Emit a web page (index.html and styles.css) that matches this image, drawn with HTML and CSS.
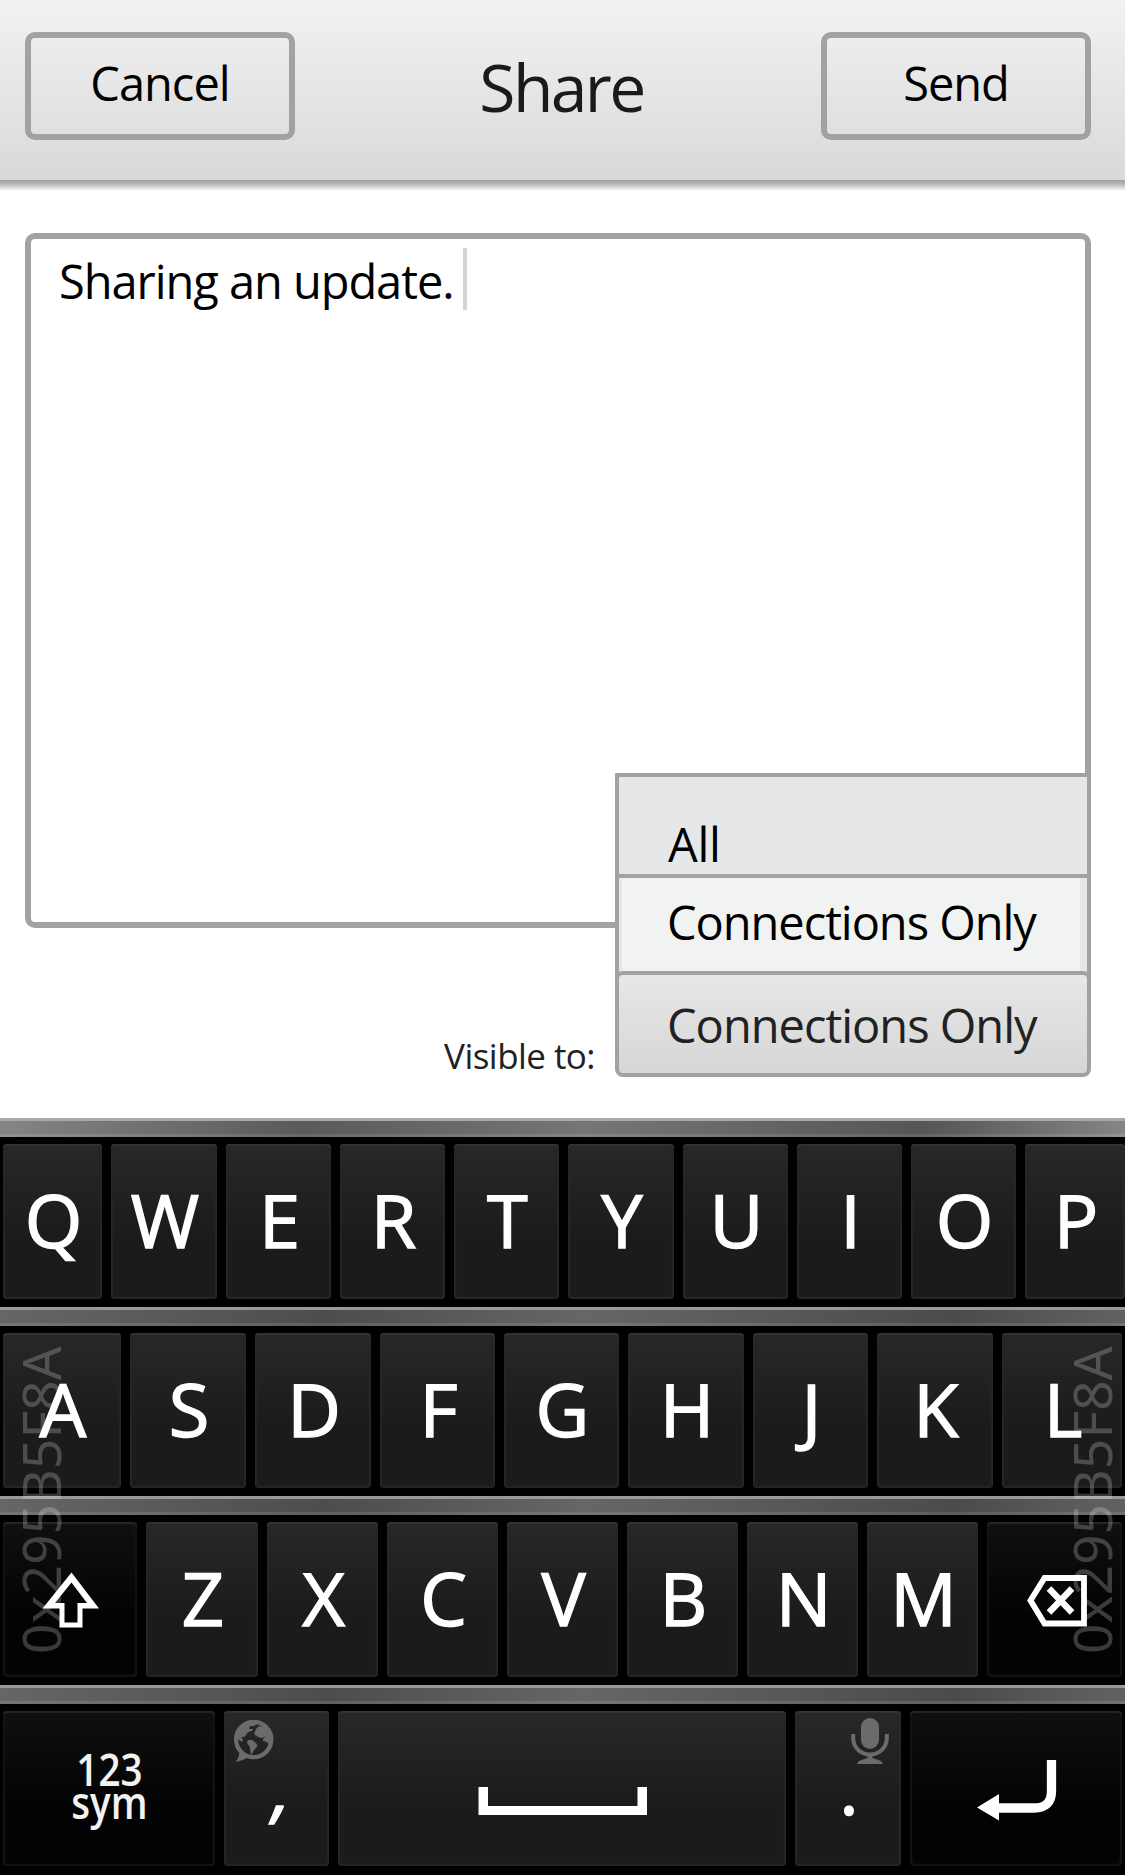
FILE: index.html
```html
<!DOCTYPE html>
<html lang="en">
<head>
<meta charset="utf-8">
<title>Share</title>
<link rel="stylesheet" href="styles.css">
</head>
<body>
<header class="topbar">
  <button class="action cancel">Cancel</button>
  <h1 class="title">Share</h1>
  <button class="action send">Send</button>
</header>

<main class="compose">
  <div class="editor"><span class="draft">Sharing an update.</span><span class="caret"></span></div>
  <div class="visibility">
    <span class="visibility-label">Visible to:</span>
    <div class="dropdown">
      <ul class="menu">
        <li class="option">All</li>
        <li class="option selected">Connections Only</li>
      </ul>
      <div class="current">Connections Only</div>
    </div>
  </div>
</main>

<section class="keyboard">
  <div class="fret first"></div>
  <div class="keys row-q">
    <span class="key">Q</span><span class="key">W</span><span class="key">E</span><span class="key">R</span><span class="key">T</span><span class="key">Y</span><span class="key">U</span><span class="key">I</span><span class="key">O</span><span class="key">P</span>
  </div>
  <div class="fret"></div>
  <div class="keys row-a">
    <span class="key">A</span><span class="key">S</span><span class="key">D</span><span class="key">F</span><span class="key">G</span><span class="key">H</span><span class="key">J</span><span class="key">K</span><span class="key">L</span>
  </div>
  <div class="fret"></div>
  <div class="keys row-z">
    <span class="key dark icon-key shift">
      <svg width="58" height="56" viewBox="0 0 58 56"><path fill="#fff" fill-rule="evenodd" d="M29.5 0.5 57 36.500H40.500V55.500H17.500V36.500H0.500ZM29.500 10.500 13 31H22.500V50.500H35.500V31H45Z"/></svg>
    </span>
    <span class="key">Z</span><span class="key">X</span><span class="key">C</span><span class="key">V</span><span class="key">B</span><span class="key">N</span><span class="key">M</span>
    <span class="key dark icon-key backspace">
      <svg width="60" height="52" viewBox="0 0 60 52"><path fill="none" stroke="#fff" stroke-width="5.800" d="M17.500 3H57V48.500H17.500L3.500 25.500Z"/><path fill="none" stroke="#fff" stroke-width="6.500" d="M22 13.500 45 37.500M45 13.500 22 37.500"/></svg>
    </span>
  </div>
  <div class="fret"></div>
  <div class="keys row-space">
    <span class="key dark sym"><span>123</span><span>sym</span></span>
    <span class="key"><svg class="badge globe" width="42" height="43" viewBox="0 0 42 43"><circle cx="20.700" cy="19.500" r="17.600" fill="none" stroke="#6b6b6b" stroke-width="4.400"/><g fill="#6b6b6b"><path d="M6 30C7 36 5 39 2.500 41.500 8 41.500 12 39 17 36Z"/><path d="M2 20 4 10 10 4 18 2 24 4 21 6 17 6 16 9 20 9 19 11 15 12 13 15 11 17 8 17 10 20 9 22 5 19Z"/><path d="M15 20 19 20 23 23 24.500 26 22 29 20 32 18.500 35 17 30 17 27 14 23Z"/><path d="M23 9 26 6 31 7 38 14 40 21 37 26 34 22 30 21 30 19 33 16 29 18 25 17 21 14Z"/></g></svg><i class="comma">,</i></span>
    <span class="key icon-key space">
      <svg width="170" height="28" viewBox="0 0 170 28"><path fill="#fff" d="M0.500 0H10V19H159.500V0H169V28H0.500Z"/></svg>
    </span>
    <span class="key"><svg class="badge mic" width="38" height="48" viewBox="0 0 38 48"><rect x="10" y="1" width="18" height="31" rx="9" fill="#6b6b6b"/><path fill="none" stroke="#6b6b6b" stroke-width="4" d="M2.200 17V21C2.200 30 9 37.500 19 37.500S35.800 30 35.800 21V17"/><path fill="#6b6b6b" d="M16.500 37H21.500V41C25 42.500 31 43 32 47H6C7 43 13 42.500 16.500 41Z"/></svg>.</span>
    <span class="key dark icon-key enter">
      <svg width="80" height="62" viewBox="0 0 80 62"><path fill="none" stroke="#fff" stroke-width="9.300" d="M20 48H57Q74.500 48 74.500 31V0"/><path fill="#fff" d="M0 47.500 22 34V60.500Z"/></svg>
    </span>
  </div>
  <span class="watermark left">0x295B5F8A</span>
  <span class="watermark right">0x295B5F8A</span>
</section>
</body>
</html>
```
FILE: styles.css
```css
* { box-sizing: border-box; }

body {
  margin: 0;
  width: 1125px;
  height: 1875px;
  display: flex;
  flex-direction: column;
  overflow: hidden;
  background: #fff;
  color: #000;
  font: 47px "Open Sans", "Noto Sans", sans-serif;
}

/* Header */
.topbar {
  flex: none;
  height: 191px;
  padding: 32px 34px 0 25px;
  display: flex;
  align-items: flex-start;
  justify-content: space-between;
  background:
    linear-gradient(#a0a0a0, #b4b4b4 35%, #fff) 0 180px / 100% 11px no-repeat,
    linear-gradient(#f2f2f2, #d9d9d9) 0 0 / 100% 180px no-repeat;
}

.action {
  width: 270px;
  height: 108px;
  padding: 0 0 5px;
  border: 6px solid #a2a2a2;
  border-radius: 10px;
  background: none;
  color: #000;
  font: inherit;
  line-height: 91px;
  text-align: center;
  white-space: nowrap;
}

.cancel { letter-spacing: -1px; }
.send { letter-spacing: -1.1px; }

.title {
  margin: 0;
  height: 109px;
  font-size: 66px;
  font-weight: 400;
  line-height: 109px;
  letter-spacing: -2.6px;
  color: #1a1a1a;
  padding-left: 7px;
}

/* Compose area */
.compose {
  flex: none;
  height: 927px;
  padding: 42px 34px 0 25px;
}

.editor {
  height: 695px;
  padding: 9px 28px;
  display: flex;
  align-items: flex-start;
  border: 6px solid #a2a2a2;
  border-radius: 10px;
}

.draft {
  line-height: 66px;
  letter-spacing: -1.05px;
  white-space: nowrap;
}

.caret {
  width: 4px;
  height: 62px;
  margin-left: 9px;
  background: #d4d4d4;
}

.visibility {
  margin-top: 43px;
  display: flex;
  justify-content: flex-end;
  color: #222;
}

.visibility-label {
  margin: 61px 20px 0 0;
  font-size: 35px;
  line-height: 48px;
  letter-spacing: -0.55px;
}

.dropdown {
  position: relative;
  width: 476px;
}

.current {
  position: relative;
  height: 106px;
  padding-left: 48px;
  border: 4px solid #a2a2a2;
  border-radius: 8px;
  background: linear-gradient(#e7e7e7, #d6d6d6);
  line-height: 100px;
  letter-spacing: -1px;
  white-space: nowrap;
}

.menu {
  position: absolute;
  left: 0;
  bottom: 94px;
  width: 476px;
  height: 210px;
  margin: 0;
  padding: 0;
  list-style: none;
  border: 4px solid #a2a2a2;
  border-bottom: 0;
  background: #e6e7e9;
  color: #000;
}

.menu { height: 213px; }

.option {
  height: 101px;
  padding-left: 49px;
  border-bottom: 4px solid #a2a2a2;
  line-height: 134px;
  letter-spacing: -0.3px;
  white-space: nowrap;
}

.option.selected {
  height: 108px;
  margin: 0 7px 0 3px;
  padding-left: 45px;
  border: 0;
  background: #f1f3f2;
  line-height: 89px;
  letter-spacing: -1.05px;
}

/* Keyboard */
.keyboard {
  position: relative;
  flex: 1;
  background: #000;
  color: #fff;
}

.fret {
  height: 19px;
  border-top: 3px solid #999;
  background:
    linear-gradient(rgba(255, 255, 255, 0.1), rgba(255, 255, 255, 0.1)) 0 100% / 100% 3px no-repeat,
    linear-gradient(92deg, #666, #4d4d4d 29%, #666 52%, #4b4b4b 85%, #626262);
}

.fret.first {
  border-color: #a9a9a9;
  background:
    linear-gradient(rgba(255, 255, 255, 0.1), rgba(255, 255, 255, 0.1)) 0 100% / 100% 3px no-repeat,
    linear-gradient(92deg, #858585, #5a5a5a 27%, #767676 52%, #555 82%, #858585);
}

.keys {
  height: 170px;
  padding: 7px 0 8px 3px;
  display: grid;
  column-gap: 9px;
}

.row-q { grid-template-columns: 99px 106px 105px 105px 105px 106px 105px 105px 105px 100px; }
.row-a { grid-template-columns: 118px 116px 116px 115px 115px 116px 115px 116px 120px; }
.row-z { grid-template-columns: 134px 112px 111px 111px 111px 111px 111px 111px 135px; }
.row-space { grid-template-columns: 212px 105px 448px 106px 212px; }

.key {
  position: relative;
  height: 155px;
  padding-left: 2px;
  border-radius: 4px;
  background: linear-gradient(#282828, #1b1b1b 60%);
  box-shadow: inset 0 2px 1px #343434, inset 0 0 2px 2px #262626;
  font-size: 74px;
  line-height: 151px;
  text-align: center;
  -webkit-text-stroke: 1.4px #fff;
}

.key.dark {
  background: linear-gradient(#101010, #030303 60%);
  box-shadow: inset 0 2px 1px #262626, inset 0 0 2px 2px #151515;
}

.icon-key {
  display: flex;
  align-items: flex-start;
  justify-content: center;
}

.key.shift { padding-top: 50px; }
.key.backspace { padding: 53px 0 0 5px; }
.key.space { padding-top: 76px; }
.key.enter { padding: 49px 0 0 1px; }

.key.sym {
  display: flex;
  flex-direction: column;
  align-items: center;
  padding: 41px 0 0;
  font-size: 46px;
  font-weight: 600;
  line-height: 33px;
  color: #f2f2f2;
  -webkit-text-stroke: 0;
}

.sym span { transform: scaleX(0.84); }

.comma { padding-left: 8px; }

.badge { position: absolute; }
.globe { left: 9px; top: 9px; }
.mic { right: 12px; top: 6px; }

.watermark {
  position: absolute;
  top: 536px;
  font-family: "Noto Sans", sans-serif;
  font-size: 53px;
  line-height: 53px;
  letter-spacing: 0.2px;
  color: rgba(255, 255, 255, 0.22);
  white-space: nowrap;
  transform: rotate(-90deg);
  transform-origin: 0 0;
}

.watermark.left { left: 14px; }
.watermark.right { left: 1065px; }
```
